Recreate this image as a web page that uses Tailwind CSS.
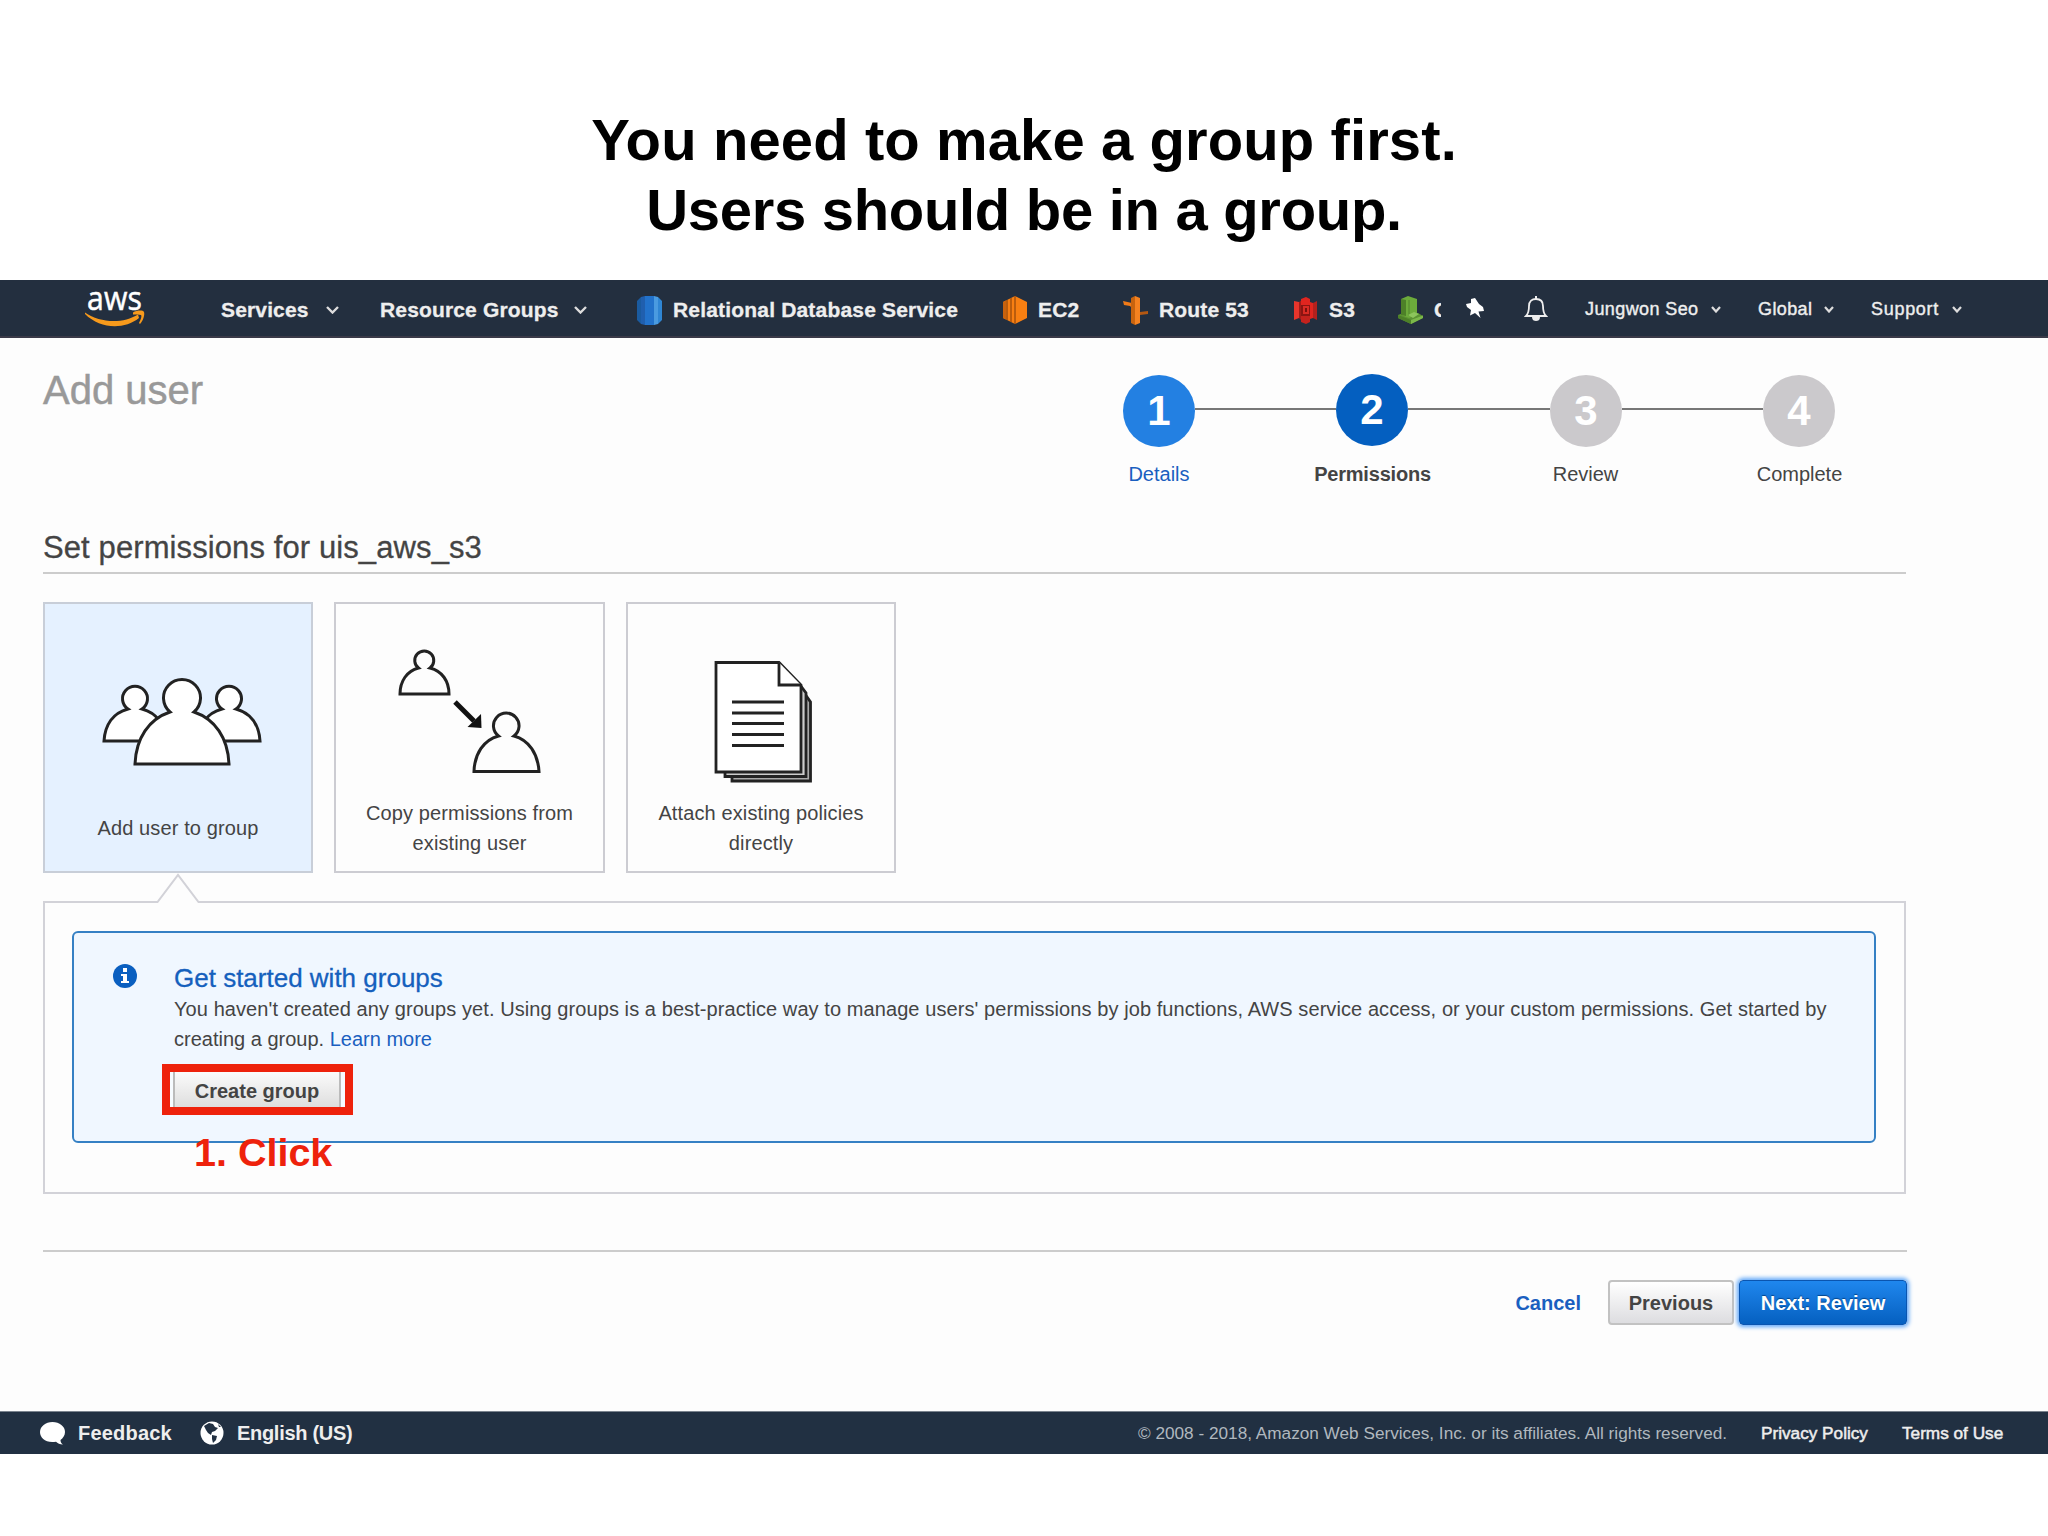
<!DOCTYPE html>
<html lang="en">
<head>
  <meta charset="UTF-8" />
  <meta name="viewport" content="width=device-width, initial-scale=1.0" />
  <title>Add user</title>
  <script src="https://cdn.jsdelivr.net/npm/@tailwindcss/browser@4"></script>
</head>
<body class="bg-white w-[2048px] h-[1536px] overflow-hidden font-['Liberation_Sans',Arial,sans-serif] text-[20px] leading-[30px] text-[#444] whitespace-nowrap">

  <!-- Slide title -->
  <h1 class="h-[280px] pt-[105px] text-center text-black font-bold text-[58px] leading-[70px]"><span class="tracking-[0.1px]">You need to make a group first.</span><br /><span class="tracking-[-0.3px]">Users should be in a group.</span></h1>

  <!-- Top bar -->
  <header class="flex items-center h-[58px] pl-[84px] bg-[#232f3f] border-b-2 border-[#3a3a48] text-[#eee] font-bold text-[21px] tracking-[0.15px] [-webkit-text-stroke:0.3px]">
    <svg class="w-[62px] h-[40px] shrink-0 overflow-visible" viewBox="0 0 62 40">
      <text x="3" y="21.500" font-size="33" font-weight="400" font-family="Open Sans" fill="#fff" stroke="#fff" stroke-width="0.5" textLength="55" lengthAdjust="spacingAndGlyphs">aws</text>
      <path d="M1 24.500C16 35 39 36 54 26.500L55 30C40 42 16 41 1 26Z" fill="#f79a1c"/>
      <path d="M49 24.500C53 22 59 22 60 24C61 27 59 33 56 36L55 35C57 31 58 28 57 27C55 26 52 26.500 49 26.500Z" fill="#f79a1c"/>
    </svg>
    <div class="flex items-center ml-[75px] w-[159px] pt-[3px]">
      <span class="w-[105px]">Services</span>
      <svg class="w-[13px] h-[8px]" viewBox="0 0 13 8" fill="none" stroke="#ddd" stroke-width="2.4"><path d="M1 1L6.5 6.5L12 1"/></svg>
    </div>
    <div class="flex items-center w-[257px] pt-[3px]">
      <span class="w-[194px]">Resource Groups</span>
      <svg class="w-[13px] h-[8px]" viewBox="0 0 13 8" fill="none" stroke="#ddd" stroke-width="2.4"><path d="M1 1L6.5 6.5L12 1"/></svg>
    </div>
    <div class="flex items-center w-[366px] pt-[4px]">
      <svg class="w-[25px] h-[29px] mr-[11px]" viewBox="0 0 25 29">
        <path d="M0 5L4 1V28L0 24Z" fill="#1a5ba0"/><path d="M4 1L8 0V29L4 28Z" fill="#205fae"/>
        <path d="M8 0H17V29H8Z" fill="#2272cb"/><path d="M17 0L21 1V28L17 29Z" fill="#4a9be0"/><path d="M21 1L25 5V24L21 28Z" fill="#2f86d4"/>
      </svg>
      <span class="tracking-[0.18px]">Relational Database Service</span>
    </div>
    <div class="flex items-center w-[120px] pt-[4px]">
      <svg class="w-[24px] h-[28px] mr-[11px]" viewBox="0 0 24 28">
        <path d="M12 0L24 6V22L12 28L0 22V6Z" fill="#f77f12"/>
        <path d="M4 4V24M8 2V26M12 0V28" stroke="#9a4b0c" stroke-width="1.3"/>
        <path d="M0 6V22L3 23.500V4.500Z" fill="#c8620d"/>
      </svg>
      <span>EC2</span>
    </div>
    <div class="flex items-center w-[171px] pt-[4px]">
      <svg class="w-[25px] h-[29px] mr-[11px]" viewBox="0 0 25 29">
        <path d="M0 5L9 7V12L7 10L1 9Z" fill="#f07a18"/><path d="M17 16L25 15V18L17 19Z" fill="#b35812"/>
        <path d="M8 2L12 0V29L8 27Z" fill="#c8640f"/><path d="M12 0L17 2V27L12 29Z" fill="#f58220"/>
      </svg>
      <span>Route 53</span>
    </div>
    <div class="flex items-center w-[104px] pt-[4px]">
      <svg class="w-[23px] h-[27px] mr-[12px]" viewBox="0 0 23 27">
        <path d="M0 4L5 5V21L0 23Z" fill="#e8352c"/><path d="M5 5L8 3V24L5 21Z" fill="#a31c18"/>
        <path d="M7 2L12 0L16 2V8H7Z" fill="#e0251f"/><path d="M7 19H16V25L12 27L7 25Z" fill="#c4221d"/>
        <path d="M7 8H16V19H7Z" fill="#8a1512"/><path d="M9 9H15V17H9Z" fill="#d92b24"/><path d="M12 11V15" stroke="#7a100d" stroke-width="2"/>
        <path d="M16 5L19 6V21L16 22Z" fill="#e0251f"/><path d="M19 6L23 4V23L19 21Z" fill="#b3211d"/>
      </svg>
      <span>S3</span>
    </div>
    <div class="flex items-center w-[68px] pt-[4px]">
      <svg class="w-[25px] h-[28px] mr-[11px]" viewBox="0 0 25 28">
        <path d="M0 19L5 17H20L25 20V22L13 28L0 22Z" fill="#5b9233"/>
        <path d="M3 3L10 0L19 3V19L11 22L3 19Z" fill="#6cab3b"/><path d="M3 3L8 4V20L3 19Z" fill="#4d8028"/>
        <path d="M11 4V20" stroke="#5b9233" stroke-width="1.500"/>
        <path d="M10 19L16 16L21 18L15 22Z" fill="#8cc55c"/><path d="M0 19L13 24V28L0 22Z" fill="#4d8028"/><path d="M13 24L25 19.500V22L13 28Z" fill="#7cb84a"/>
      </svg>
      <span class="w-[7px] overflow-hidden">C</span>
    </div>
    <svg class="w-[18px] h-[21px] shrink-0" viewBox="0 0 18 21">
      <path d="M5 1L9 0L13 6L17 9L18 13L12.500 13.500L14.500 20L9 15L4 17.500L5 12L1 9L0 6L5 5Z" fill="#fff"/>
    </svg>
    <svg class="w-[24px] h-[25px] shrink-0 ml-[40px]" viewBox="0 0 24 25">
      <path d="M2 20C5 17 5 14 5 10C5 5 8 3 12 3C16 3 19 5 19 10C19 14 19 17 22 20Z" fill="none" stroke="#eee" stroke-width="1.8"/>
      <path d="M12 0V3" stroke="#eee" stroke-width="2"/><path d="M8 21H16C16 24 14 25 12 25C10 25 8 24 8 21Z" fill="#eee"/>
    </svg>
    <div class="flex items-center ml-[37px] pt-0.5 font-normal text-[18px] tracking-[0.4px] [-webkit-text-stroke:0.4px]">
      <span class="w-[126px]">Jungwon Seo</span>
      <svg class="w-[10px] h-[7px] mr-[37px]" viewBox="0 0 10 7" fill="none" stroke="#ddd" stroke-width="2.2"><path d="M1 1L5 5.500L9 1"/></svg>
      <span class="w-[66px]">Global</span>
      <svg class="w-[10px] h-[7px] mr-[37px]" viewBox="0 0 10 7" fill="none" stroke="#ddd" stroke-width="2.2"><path d="M1 1L5 5.500L9 1"/></svg>
      <span class="w-[81px] tracking-[0.7px]">Support</span>
      <svg class="w-[10px] h-[7px]" viewBox="0 0 10 7" fill="none" stroke="#ddd" stroke-width="2.2"><path d="M1 1L5 5.500L9 1"/></svg>
    </div>
  </header>

  <main class="h-[1073px] bg-[#fdfdfd] pl-[43px] pr-[142px]">
    <!-- Heading and wizard steps -->
    <div class="flex justify-between h-[188px]">
      <h2 class="pt-[27px] text-[40px] leading-[50px] text-[#999] [-webkit-text-stroke:0.5px]">Add user</h2>
      <ol class="flex pt-[35px]">
        <li class="flex flex-col items-center w-[214px]">
          <div class="flex items-center w-full h-[74px]">
            <div class="w-[70px]"></div>
            <div class="w-[72px] h-[72px] mt-[2px] rounded-full bg-[#2380e2] text-white font-bold text-[42px] leading-[72px] text-center shrink-0">1</div>
            <div class="h-0.5 grow bg-[#777] -mt-[2px]"></div>
          </div>
          <span class="mt-[12px] -ml-0.5 text-[#1a5fc0]">Details</span>
        </li>
        <li class="flex flex-col items-center w-[213px]">
          <div class="flex items-center w-full h-[74px]">
            <div class="h-0.5 w-[69px] bg-[#777] -mt-[2px]"></div>
            <div class="w-[72px] h-[72px] rounded-full bg-[#045fc0] text-white font-bold text-[42px] leading-[72px] text-center shrink-0 -mt-[1px]">2</div>
            <div class="h-0.5 grow bg-[#777] -mt-[2px]"></div>
          </div>
          <span class="mt-[12px] -ml-0.5 font-bold tracking-[-0.2px]">Permissions</span>
        </li>
        <li class="flex flex-col items-center w-[213px]">
          <div class="flex items-center w-full h-[74px]">
            <div class="h-0.5 w-[70px] bg-[#777] -mt-[2px]"></div>
            <div class="w-[72px] h-[72px] mt-[2px] rounded-full bg-[#cbc9cc] text-white font-bold text-[42px] leading-[72px] text-center shrink-0">3</div>
            <div class="h-0.5 grow bg-[#777] -mt-[2px]"></div>
          </div>
          <span class="mt-[12px] -ml-0.5">Review</span>
        </li>
        <li class="flex flex-col items-center w-[213px]">
          <div class="flex items-center w-full h-[74px]">
            <div class="h-0.5 grow bg-[#777] -mt-[2px]"></div>
            <div class="w-[72px] h-[72px] mt-[2px] rounded-full bg-[#cbc9cc] text-white font-bold text-[42px] leading-[72px] text-center shrink-0">4</div>
            <div class="w-[71px]"></div>
          </div>
          <span class="mt-[12px]">Complete</span>
        </li>
      </ol>
    </div>

    <h3 class="h-[48px] border-b-2 border-[#ccc] text-[31px] leading-[44px] tracking-[0.1px] [-webkit-text-stroke:0.3px]">Set permissions for uis_aws_s3</h3>

    <!-- Permission options -->
    <div class="flex gap-[21px] mt-[28px] text-center tracking-[0.12px]">
      <div class="flex flex-col items-center w-[270px] h-[271px] bg-[#e5f1ff] border-2 border-[#c8ced8]">
        <svg class="w-[160px] h-[92px] mt-[72px] ml-[7px] shrink-0" viewBox="0 0 160 92" fill="#fff" stroke="#222" stroke-width="3">
          <path d="M2 65C3 49 11 37 26 33A12.500 12.500 0 1 1 40 33C55 37 63 49 64 65Z"/>
          <path d="M96 65C97 49 105 37 120 33A12.500 12.500 0 1 1 134 33C149 37 157 49 158 65Z"/>
          <path d="M33 88C34 62 47 43 68 36A18.500 18.500 0 1 1 92 36C113 43 126 62 127 88Z"/>
        </svg>
        <span class="mt-[45px]">Add user to group</span>
      </div>
      <div class="flex flex-col items-center w-[271px] h-[271px] border-2 border-[#ccccd2]">
        <svg class="w-[146px] h-[126px] mt-[44px] shrink-0" viewBox="0 0 146 126" fill="none" stroke="#222" stroke-width="3">
          <path d="M3 46C3 33 10 23 21.500 20A9.500 9.500 0 1 1 33 20C45 23 52 33 52 46Z"/>
          <path d="M77 123.500C77.500 106 86.500 92 101.500 88A12.800 12.800 0 1 1 117 88C132 92 141 106 142 123.500Z"/>
          <path d="M58 54L77 73" stroke="#111" stroke-width="5"/><path d="M84 66L84.500 80L70.500 79Z" fill="#111" stroke="none"/>
        </svg>
        <span class="mt-[24px]">Copy permissions from</span>
        <span>existing user</span>
      </div>
      <div class="flex flex-col items-center w-[270px] h-[271px] border-2 border-[#ccccd2]">
        <svg class="w-[100px] h-[124px] mt-[56px] ml-[3px] shrink-0" viewBox="0 0 100 124" fill="#fff" stroke="#222" stroke-width="2.8">
          <path d="M19 100V121H97.500V42L92 34Z" fill="#aaa"/>
          <path d="M12 100V116.500H93V33L87 25Z" fill="#ccc"/>
          <path d="M3 2.500H66L88 25V112H3Z"/><path d="M66 2.500V25H88"/>
          <path d="M19 42H71M19 53H71M19 63.500H71M19 74.500H71M19 85.500H71"/>
        </svg>
        <span class="mt-[14px]">Attach existing policies</span>
        <span>directly</span>
      </div>
    </div>

    <!-- Selected option panel -->
    <section class="relative mt-[28px] h-[293px] border-2 border-[#d2d2d8] px-[27px] pt-[28px]">
      <svg class="absolute -top-[30px] left-[111px] w-[44px] h-[31px]" viewBox="0 0 44 31">
        <path d="M1 31V29L22 2L43 29V31Z" fill="#fdfdfd"/><path d="M0 29H1.500L22 2L42.500 29H44" fill="none" stroke="#d2d2d8" stroke-width="2"/>
      </svg>
      <div class="flex h-[212px] w-[1804px] pl-[39px] pt-[29px] bg-[#f0f7ff] border-2 border-[#3580c4] rounded-md">
        <svg class="w-[24px] h-[24px] mt-[2px] mr-[37px] shrink-0" viewBox="0 0 24 24">
          <circle cx="12" cy="12" r="12" fill="#0a5fc0"/>
          <path d="M10 4H14V8H10ZM8 10H14V17H16V19H8V17H10V12H8Z" fill="#fff"/>
        </svg>
        <div>
          <h4 class="text-[26px] leading-[32px] text-[#1560bd] [-webkit-text-stroke:0.3px]">Get started with groups</h4>
          <p><span class="tracking-[0.08px]">You haven't created any groups yet. Using groups is a best-practice way to manage users' permissions by job functions, AWS service access, or your custom permissions. Get started by</span><br /><span>creating a group.</span> <a class="text-[#1a5fc0]">Learn more</a></p>
          <div class="-ml-[12px] mt-[10px] w-[191px] h-[51px] border-[8px] border-[#ee220c] px-[3px] bg-[#f6fbff]">
            <button class="block w-[168px] h-[35px] border-x-2 border-[#bbb] bg-linear-to-b from-[#fbfbfb] to-[#dedede] font-bold leading-[38px] text-center">Create group</button>
          </div>
          <div class="mt-[12px] ml-[20px] text-[#ee220c] font-bold text-[39.5px] leading-[50px]">1. Click</div>
        </div>
      </div>
    </section>

    <!-- Wizard buttons -->
    <div class="flex justify-end items-center -mr-[1px] mt-[56px] pt-[28px] border-t-2 border-[#ccc] font-bold">
      <a class="mr-[27px] text-[#1a5fc0]">Cancel</a>
      <button class="w-[126px] h-[45px] mr-[5px] rounded border-2 border-[#c2c2c2] bg-linear-to-b from-white to-[#dddde0]">Previous</button>
      <button class="w-[168px] h-[45px] rounded border border-[#0a55b0] bg-linear-to-b from-[#1f87ee] to-[#0560c0] text-white [text-shadow:0_-1px_1px_#04458c] shadow-[0_0_4px_2px_#5ea6f8]">Next: Review</button>
    </div>
  </main>

  <!-- Footer -->
  <footer class="flex items-center h-[43px] pl-[40px] bg-[#213042] border-t border-[#7a838e] text-[#eee] font-bold">
    <svg class="w-[25px] h-[23px] mr-[13px]" viewBox="0 0 25 23"><path d="M12.500 0C19.500 0 25 4.500 25 10C25 13.500 23 16 20.500 18C20.500 20 21.500 21.500 23 22.500C20 22.500 17.500 21 16 19.700C6 21.500 0 16 0 10C0 4.500 5.500 0 12.500 0Z" fill="#fff"/></svg>
    <span class="w-[122px] tracking-[0.2px]">Feedback</span>
    <svg class="w-[24px] h-[24px] mr-[13px]" viewBox="0 0 24 24">
      <circle cx="12" cy="12" r="11.500" fill="#fff"/>
      <path d="M4 5L9 2L13 3L15 6L18 7L15 10L12 11L11 14L8 12L6 9Z" fill="#213042"/><path d="M12 14L17 15L16 19L13 22L12 18Z" fill="#213042"/><path d="M18 3L21 6L19 6Z" fill="#213042"/>
    </svg>
    <span class="w-[901px] tracking-[-0.3px]">English (US)</span>
    <span class="w-[623px] font-normal text-[17.2px] text-[#b0b8bf]">© 2008 - 2018, Amazon Web Services, Inc. or its affiliates. All rights reserved.</span>
    <span class="w-[141px] font-normal text-[17.2px] [-webkit-text-stroke:0.5px]">Privacy Policy</span>
    <span class="font-normal text-[17.2px] [-webkit-text-stroke:0.5px]">Terms of Use</span>
  </footer>
</body>
</html>
